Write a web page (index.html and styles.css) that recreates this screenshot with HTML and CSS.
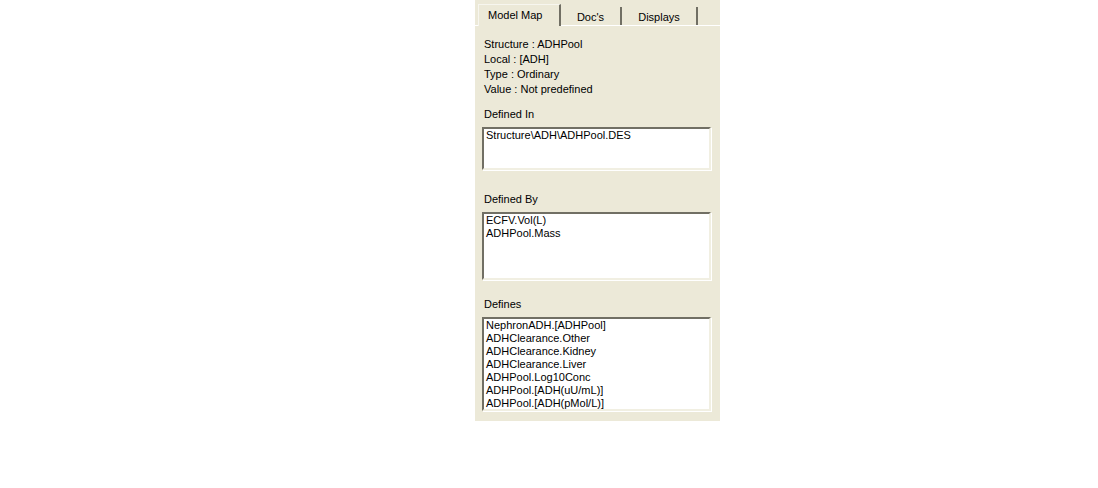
FILE: index.html
```html
<!DOCTYPE html>
<html>
<head>
<meta charset="utf-8">
<link rel="stylesheet" href="styles.css">
</head>
<body>
<div class="page">
  <div class="panel">
    <div class="tabs">
      <div class="tab selected">Model Map</div>
      <div class="tab doc">Doc's</div>
      <div class="tab disp">Displays</div>
    </div>
    <div class="content">
      <div class="info">
        <div class="line">Structure : ADHPool</div>
        <div class="line">Local : [ADH]</div>
        <div class="line">Type : Ordinary</div>
        <div class="line">Value : Not predefined</div>
      </div>
      <div class="label l-in">Defined In</div>
      <div class="listbox lb-in">
        <div class="item">Structure\ADH\ADHPool.DES</div>
      </div>
      <div class="label l-by">Defined By</div>
      <div class="listbox lb-by">
        <div class="item">ECFV.Vol(L)</div>
        <div class="item">ADHPool.Mass</div>
      </div>
      <div class="label l-defs">Defines</div>
      <div class="listbox lb-defs">
        <div class="item">NephronADH.[ADHPool]</div>
        <div class="item">ADHClearance.Other</div>
        <div class="item">ADHClearance.Kidney</div>
        <div class="item">ADHClearance.Liver</div>
        <div class="item">ADHPool.Log10Conc</div>
        <div class="item">ADHPool.[ADH(uU/mL)]</div>
        <div class="item">ADHPool.[ADH(pMol/L)]</div>
      </div>
    </div>
  </div>
</div>
</body>
</html>
```
FILE: styles.css
```css
html, body {
  margin: 0;
  padding: 0;
  background: #ffffff;
}
.page {
  display: flex;
  padding-left: 475px;
}
.panel {
  width: 245px;
  height: 421px;
  background: #ECE9D8;
  font-family: "Liberation Sans", Arial, sans-serif;
  font-size: 11px;
  color: #000;
  display: flex;
  flex-direction: column;
}
.tabs {
  display: flex;
  align-items: flex-end;
  height: 25px;
  border-bottom: 1px solid #ffffff;
  padding-left: 3px;
}
.tab {
  box-sizing: border-box;
  height: 18px;
  display: flex;
  align-items: center;
  justify-content: center;
  border-right: 2px solid #716F64;
  padding-top: 2px;
}
.tab.selected {
  height: 22px;
  width: 83px;
  margin-bottom: -1px;
  border-top: 1px solid #F7F6EF;
  border-left: 1px solid #F7F6EF;
  border-right: 2px solid #716F64;
  background: #ECE9D8;
  justify-content: flex-start;
  padding: 0 0 2px 9px;
}
.tab.doc {
  width: 61px;
}
.tab.disp {
  width: 76px;
}
.content {
  display: flex;
  flex-direction: column;
  padding: 11px 0 0 7px;
}
.info {
  padding-left: 2px;
}
.line, .label {
  height: 15px;
  line-height: 15px;
  white-space: nowrap;
}
.label {
  padding-left: 2px;
}
.l-in { margin-top: 10px; }
.l-by { margin-top: 22px; }
.l-defs { margin-top: 17px; }
.listbox {
  box-sizing: border-box;
  width: 229px;
  margin-top: 5px;
  background: #ffffff;
  border-style: solid;
  border-width: 2px;
  border-color: #716F64 #F1EFE2 #F1EFE2 #716F64;
  box-shadow: 1px 1px 0 #ffffff;
  padding: 0 2px;
  overflow: hidden;
}
.lb-in { height: 43px; }
.lb-by { height: 68px; }
.lb-defs { height: 94px; }
.item {
  height: 13px;
  line-height: 13px;
  white-space: nowrap;
}
```
